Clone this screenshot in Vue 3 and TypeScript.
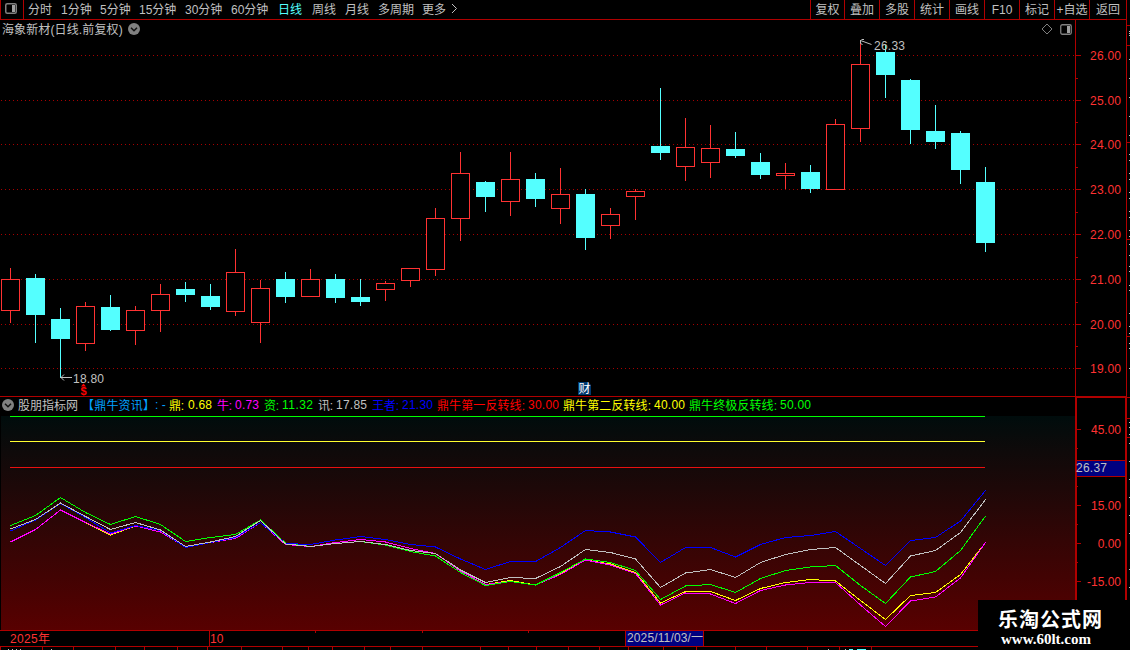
<script setup lang="ts">
interface Candle { x: number; high: number; top: number; bottom: number; low: number; up: boolean }
interface Tab { label: string; width: number; active?: boolean }

const tabs: Tab[] = [
  { label: '分时', width: 33 }, { label: '1分钟', width: 39 }, { label: '5分钟', width: 39 },
  { label: '15分钟', width: 46 }, { label: '30分钟', width: 46 }, { label: '60分钟', width: 47 },
  { label: '日线', width: 34, active: true }, { label: '周线', width: 33 }, { label: '月线', width: 33 },
  { label: '多周期', width: 44 }, { label: '更多', width: 28 },
]
const tools: Tab[] = [
  { label: '复权', width: 34 }, { label: '叠加', width: 35 }, { label: '多股', width: 35 },
  { label: '统计', width: 35 }, { label: '画线', width: 35 }, { label: 'F10', width: 35 },
  { label: '标记', width: 35 }, { label: '+自选', width: 35 }, { label: '返回', width: 37 },
]

// high, body top, body bottom, low, 1 = rising day
const raw: number[][] = [
  [268, 279, 311, 323, 1], [274, 278, 315, 343, 0], [308, 319, 339, 378, 0], [302, 306, 344, 351, 1],
  [295, 307, 330, 331, 0], [306, 310, 331, 345, 1], [284, 294, 311, 332, 1], [282, 289, 295, 302, 0],
  [284, 296, 307, 310, 0], [249, 272, 312, 316, 1], [280, 288, 323, 343, 1], [272, 279, 297, 303, 0],
  [269, 279, 297, 297, 1], [274, 279, 298, 303, 0], [279, 297, 302, 306, 0], [281, 283, 290, 301, 1],
  [268, 268, 281, 287, 1], [208, 218, 270, 276, 1], [152, 173, 219, 241, 1], [181, 182, 197, 212, 0],
  [152, 179, 202, 216, 1], [173, 179, 199, 207, 0], [168, 194, 209, 224, 1], [189, 194, 238, 250, 0],
  [208, 214, 226, 239, 1], [189, 191, 197, 220, 1], [88, 146, 153, 160, 0], [118, 147, 167, 181, 1],
  [125, 148, 163, 178, 1], [132, 149, 156, 158, 0], [153, 162, 175, 179, 0], [163, 173, 176, 189, 1],
  [165, 172, 189, 193, 0], [119, 124, 190, 190, 1], [42, 64, 129, 142, 1], [45, 52, 75, 98, 0],
  [79, 80, 130, 144, 0], [105, 131, 142, 149, 0], [131, 133, 170, 184, 0], [167, 182, 243, 252, 0],
]
const candles: Candle[] = raw.map((c, i) => ({
  x: 1 + i * 25, high: c[0], top: c[1], bottom: c[2], low: c[3], up: c[4] === 1,
}))

const priceTicks = [
  { y: 55, t: '26.00' }, { y: 100, t: '25.00' }, { y: 144, t: '24.00' }, { y: 189, t: '23.00' },
  { y: 234, t: '22.00' }, { y: 279, t: '21.00' }, { y: 324, t: '20.00' }, { y: 368, t: '19.00' },
]
const priceMinor = [78, 122, 167, 212, 257, 302, 346]
const indTicks = [{ y: 429, t: '45.00' }, { y: 505, t: '15.00' }, { y: 543, t: '0.00' }, { y: 581, t: '-15.00' }]
const indMinor = [448, 486, 524, 562]

const legend = [
  { x: 169, w: 15, t: '鼎:', c: 'yellow' }, { x: 188, w: 24, t: '0.68', c: 'yellow' },
  { x: 217, w: 15, t: '牛:', c: 'magenta' }, { x: 235, w: 24, t: '0.73', c: 'magenta' },
  { x: 264, w: 15, t: '资:', c: 'green' }, { x: 282, w: 31, t: '11.32', c: 'green' },
  { x: 318, w: 15, t: '讯:', c: 'silver' }, { x: 336, w: 31, t: '17.85', c: 'silver' },
  { x: 372, w: 27, t: '王者:', c: 'blue' }, { x: 402, w: 31, t: '21.30', c: 'blue' },
  { x: 437, w: 88, t: '鼎牛第一反转线:', c: 'red' }, { x: 528, w: 31, t: '30.00', c: 'red' },
  { x: 563, w: 88, t: '鼎牛第二反转线:', c: 'yellow' }, { x: 654, w: 31, t: '40.00', c: 'yellow' },
  { x: 689, w: 88, t: '鼎牛终极反转线:', c: 'green' }, { x: 780, w: 31, t: '50.00', c: 'green' },
]

const series: { name: string; v: number[] }[] = [
  { name: 'yellow', v: [541.5, 529, 509.5, 522, 534.5, 525.5, 531.5, 546.5, 542, 538, 522, 544, 546, 542, 539, 541.5, 548, 553, 570.5, 584, 580, 584.5, 573, 559.5, 563.5, 572, 602.5, 591, 591, 600, 588, 582, 579, 580.5, 600, 619, 595, 592, 574, 542] },
  { name: 'magenta', v: [541.5, 529, 509.5, 522, 533.5, 525.5, 531.5, 546.5, 542, 538, 522, 544, 546, 542, 539, 541.5, 548, 553, 570.5, 584, 581, 584.5, 574, 559.5, 564.5, 573, 604.5, 592.5, 593.5, 603, 590, 584.5, 582, 582, 604.5, 626, 600.5, 596.5, 577.5, 542] },
  { name: 'green', v: [525, 515, 497, 512, 524, 516, 524, 541, 537, 534, 519.5, 542.5, 546, 543, 541, 544.5, 551, 555.5, 572, 585, 581, 584.5, 572, 558.5, 562, 570, 599, 585.5, 584, 592, 578, 570, 566.5, 565, 585, 603, 576.5, 571, 550, 515.5] },
  { name: 'blue', v: [530.5, 519.5, 503, 517, 532.5, 525, 530, 547, 542, 537, 522, 543, 544, 539.5, 536, 539, 544, 546.5, 558.5, 569, 561, 561, 547, 530, 531.5, 536.5, 562, 547, 547, 556.5, 544, 537, 535, 531, 548, 565, 540, 537, 520.5, 490] },
  { name: 'silver', v: [528.5, 519, 502.5, 516, 529, 522, 529.5, 546, 541.5, 536, 520, 543.5, 546, 543, 541, 544, 550, 553, 569.5, 582, 577, 578, 566, 549, 552, 558.5, 587, 572.5, 569, 577, 562, 554, 549, 547, 565, 583, 555.5, 550, 532, 499] },
]
const points = (v: number[]): string => v.map((y, i) => `${10.5 + i * 25},${y + 0.5}`).join(' ')

const footTicks = [0, 42, 73, 115, 144, 177, 207, 241, 282, 308, 332, 364, 390, 422, 480, 508, 536, 568, 599, 628, 663, 696, 735, 766, 807, 839, 871]
const footDots = [8, 12, 16, 20, 51, 828, 845]
const sideLines = [25, 45, 142, 239, 336, 397, 418, 437]
const sideDots = [31, 33, 35, 59, 78, 97, 116, 135, 154, 160, 173, 179, 192, 198, 211, 217, 230, 236, 244, 255, 266, 271, 285, 290, 313, 326, 333, 343, 348, 368, 422, 427, 434, 443, 461, 479, 497, 515, 533, 569, 587]
</script>

<template>
  <div class="terminal">
    <div class="workspace">
      <header class="toolbar">
        <div class="panel-toggle">
          <svg width="12" height="11" viewBox="0 0 12 11">
            <rect x=".75" y=".75" width="10.5" height="9.5" rx="1.5" fill="none" stroke="#808080" stroke-width="1.5" />
            <rect x="7" y="2" width="3" height="7" fill="#a0a0a0" />
          </svg>
        </div>
        <nav class="tabs">
          <span v-for="t in tabs" :key="t.label" class="tab" :class="{ active: t.active }" :style="{ width: t.width + 'px' }">{{ t.label }}</span>
          <svg class="more" width="7" height="11" viewBox="0 0 7 11"><path d="M1 1L5.5 5.5L1 10" fill="none" stroke="#c0c0c0" /></svg>
        </nav>
        <div class="tools">
          <span v-for="t in tools" :key="t.label" class="tool" :style="{ width: t.width + 'px' }">{{ t.label }}</span>
        </div>
      </header>

      <section class="pane price">
        <svg width="1127" height="376" viewBox="0 20 1127 376">
          <g class="grid">
            <line v-for="p in priceTicks" :key="p.y" x1="1" x2="1075" :y1="p.y + 0.5" :y2="p.y + 0.5" />
          </g>
          <g class="axis">
            <rect x="1075" y="20" width="1" height="376" />
            <rect v-for="p in priceTicks" :key="p.y" x="1076" :y="p.y" width="5" height="1" />
            <rect v-for="y in priceMinor" :key="y" x="1076" :y="y" width="2" height="1" />
          </g>
          <text v-for="p in priceTicks" :key="p.t" class="tick" x="1090" :y="p.y + 5" textLength="31">{{ p.t }}</text>
          <g v-for="c in candles" :key="c.x" :class="c.up ? 'rise' : 'fall'">
            <rect class="solid" :x="c.x + 9" :y="c.high" width="1" :height="c.top - c.high" />
            <rect class="solid" :x="c.x + 9" :y="c.bottom" width="1" :height="c.low - c.bottom" />
            <rect v-if="c.up" class="hollow" :x="c.x + 0.5" :y="c.top + 0.5" width="18" :height="c.bottom - c.top - 1" />
            <rect v-else class="solid" :x="c.x" :y="c.top" width="19" :height="c.bottom - c.top" />
          </g>
          <path class="pointer" d="M871.5 44.5L860.5 40.5M864 39.5H861.5M860.5 40V43.5L862.5 44.5" />
          <text class="note" x="874" y="50" textLength="31">26.33</text>
          <path class="pointer" d="M72 377.5H60.5M64 374.5L61 377.5L64 380.5" />
          <text class="note" x="73" y="383" textLength="31">18.80</text>
          <path d="M83.5 383.5L81 386.5H86Z" fill="#f00" />
          <text class="dividend" x="80.5" y="395">$</text>
          <path d="M578 382H588L591 385V395H578Z" fill="#003a70" />
          <text class="report" x="578.5" y="393">财</text>
        </svg>
        <div class="caption">
          <span>海象新材(日线.前复权)</span>
          <svg width="12" height="12" viewBox="0 0 12 12"><circle cx="6" cy="6" r="6" fill="#808080" /><path d="M3 4.7L6 7.7L9 4.7" fill="none" stroke="#111" stroke-width="1.5" /></svg>
        </div>
        <div class="pane-icons">
          <svg width="12" height="12" viewBox="0 0 12 12"><path d="M6 1L11 6L6 11L1 6Z" fill="none" stroke="#808080" /></svg>
          <svg width="12" height="11" viewBox="0 0 12 11">
            <rect x=".75" y=".75" width="10.5" height="9.5" rx="1.5" fill="none" stroke="#808080" stroke-width="1.3" />
            <rect x="7" y="2" width="3" height="7" fill="#a0a0a0" />
          </svg>
        </div>
      </section>

      <section class="pane">
        <svg width="1127" height="234" viewBox="0 396 1127 234">
          <defs>
            <linearGradient id="depth" x1="0" y1="0" x2="0" y2="1">
              <stop offset="0" stop-color="#000c0c" />
              <stop offset="1" stop-color="#580000" />
            </linearGradient>
          </defs>
          <rect x="1" y="416" width="1074" height="214" fill="url(#depth)" />
          <g class="axis">
            <rect x="0" y="396" width="1127" height="1" />
            <rect x="1075" y="396" width="52" height="2" />
            <rect x="1075" y="396" width="2" height="234" />
            <rect x="1125" y="396" width="2" height="234" />
            <rect v-for="p in indTicks" :key="p.y" x="1077" :y="p.y" width="4" height="1" />
            <rect v-for="y in indMinor" :key="y" x="1077" :y="y" width="1" height="1" />
            <rect x="1077" y="460" width="48" height="17" />
          </g>
          <rect x="1077" y="461" width="48" height="15" fill="#000080" />
          <text class="note" x="1076" y="472" textLength="31">26.37</text>
          <text v-for="p in indTicks" :key="p.t" class="tick" x="1121" :y="p.y + 5" text-anchor="end">{{ p.t }}</text>

          <circle cx="8" cy="405" r="6" fill="#808080" />
          <path d="M5 403.7L8 406.7L11 403.7" fill="none" stroke="#111" stroke-width="1.5" />
          <text class="label silver" x="18" y="410" textLength="60">股朋指标网</text>
          <text class="label azure" x="82" y="410" textLength="73">【鼎牛资讯】</text>
          <text class="label azure" x="155" y="409">: -</text>
          <text v-for="l in legend" :key="l.x" class="label" :class="l.c" :x="l.x" :y="l.t.endsWith(':') ? 410 : 409" :textLength="l.w">{{ l.t }}</text>

          <g class="levels">
            <rect x="10" y="416" width="975" height="1" fill="#00ff00" />
            <rect x="10" y="441" width="975" height="1" fill="#ffff30" />
            <rect x="10" y="467" width="975" height="1" fill="#ea1010" />
          </g>
          <polyline v-for="s in series" :key="s.name" class="curve" :class="s.name" :points="points(s.v)" />
        </svg>
      </section>

      <footer>
        <svg width="1127" height="20" viewBox="0 630 1127 20">
          <g class="axis">
            <rect x="0" y="630" width="1127" height="1" />
            <rect x="0" y="646" width="1127" height="1" />
            <rect x="209" y="631" width="1" height="15" />
            <rect x="315" y="631" width="1" height="2" />
            <rect x="422" y="631" width="1" height="2" />
            <rect x="528" y="631" width="1" height="2" />
            <rect v-for="x in footTicks" :key="x" :x="x" y="647" width="1" height="3" />
            <rect x="625" y="631" width="79" height="16" />
          </g>
          <rect x="626" y="631" width="77" height="15" fill="#000080" />
          <text class="tick" x="10" y="643" textLength="40">2025年</text>
          <text class="tick" x="210" y="643">10</text>
          <text class="note" x="627" y="642" textLength="76">2025/11/03/一</text>
          <rect v-for="x in footDots" :key="x" :x="x" y="649" width="1" height="1" fill="#c0c0c0" />
          <rect x="849" y="649" width="4" height="1" fill="#54ffff" />
          <rect x="857" y="649" width="9" height="1" fill="#54ffff" />
        </svg>
      </footer>
    </div>

    <svg class="side" width="4" height="650" viewBox="1126 0 4 650">
      <g class="axis">
        <rect x="1126" y="0" width="1" height="650" />
        <rect v-for="y in sideLines" :key="y" x="1127" :y="y" width="3" height="1" />
      </g>
      <rect v-for="y in sideDots" :key="y" x="1129" :y="y" width="1" height="1" fill="#c0c0c0" />
    </svg>

    <div class="watermark">
      <svg width="152" height="50" viewBox="978 600 152 50">
        <text class="brand" x="998" y="627" textLength="104">乐淘公式网</text>
        <text class="site" x="1001" y="644" textLength="90" lengthAdjust="spacingAndGlyphs">www.60lt.com</text>
      </svg>
    </div>
  </div>
</template>

<style>
body { background: #000; overflow: hidden; }
</style>

<style scoped>
.terminal {
  position: relative;
  display: flex;
  width: 1130px;
  height: 650px;
  overflow: hidden;
  background: #000;
  color: #c0c0c0;
  font: 12px/20px "Liberation Sans", "Noto Sans CJK SC", sans-serif;
}
.terminal svg { display: block; flex: none; }
.workspace { width: 1126px; flex: none; overflow: hidden; display: flex; flex-direction: column; }
.side { flex: none; }
.toolbar {
  box-sizing: border-box;
  height: 20px;
  flex: none;
  display: flex;
  border-bottom: 1px solid #b00000;
  white-space: nowrap;
}
.panel-toggle {
  box-sizing: border-box;
  width: 24px;
  padding: 3px 0 0 4px;
  border: solid #b00000;
  border-width: 0 1px;
}
.tabs { display: flex; flex: 1; padding-left: 4px; }
.tab { flex: none; }
.tab.active { color: #54ffff; }
.more { margin-top: 3px; margin-left: 1px; }
.tools { display: flex; }
.tool {
  box-sizing: border-box;
  height: 19px;
  flex: none;
  border-left: 1px solid #b00000;
  text-align: center;
}
.pane { position: relative; flex: none; }
.caption { position: absolute; left: 2px; top: 0; display: flex; gap: 5px; white-space: nowrap; }
.caption span { width: 121px; letter-spacing: 0.12px; }
.caption svg { margin-top: 3px; }
.pane-icons { position: absolute; left: 1041px; top: 3px; display: flex; gap: 7px; }
.pane-icons svg:last-child { margin-top: 1px; }
.grid line { stroke: #a80000; stroke-dasharray: 1 3; shape-rendering: crispEdges; }
.axis { fill: #b00000; }
.rise .solid { fill: #ff3232; }
.rise .hollow { fill: #000; stroke: #ff3232; }
.fall .solid { fill: #54ffff; }
.tick { fill: #ff3232; }
.note { fill: #c0c0c0; }
.pointer { fill: none; stroke: #c0c0c0; }
.dividend { fill: #ff0000; font-weight: bold; font-size: 11px; }
.report { fill: #fff; }
.label.silver { fill: #c0c0c0; }
.label.azure { fill: #00a0ff; }
.label.yellow { fill: #ffff00; }
.label.magenta { fill: #ff00ff; }
.label.green { fill: #00ff00; }
.label.blue { fill: #0000ff; }
.label.red { fill: #ff0000; }
.curve { fill: none; stroke-width: 1; shape-rendering: crispEdges; }
.curve.yellow { stroke: #ffff00; }
.curve.magenta { stroke: #ff00ff; }
.curve.green { stroke: #00ff00; }
.curve.blue { stroke: #0000ff; }
.curve.silver { stroke: #c0c0c0; }
.watermark { position: absolute; left: 978px; top: 600px; background: #000; }
.brand { fill: #fff; font: bold 20px "Noto Sans CJK SC", sans-serif; }
.site { fill: #fff; font: bold 15px "Liberation Serif", serif; }
</style>
